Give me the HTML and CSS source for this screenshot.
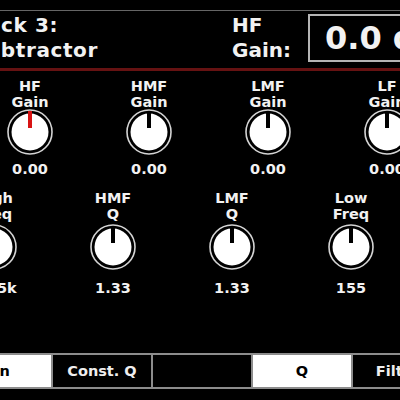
FILE: index.html
```html
<!DOCTYPE html>
<html lang="en">
<head>
<meta charset="utf-8">
<title>EQ</title>
<link rel="stylesheet" href="styles.css">
</head>
<body>
<div class="screen">
  <header class="header">
    <div class="title"><div>Rack 3:</div><div>Subtractor</div></div>
    <div class="param-name"><div>HF</div><div>Gain:</div></div>
    <div class="value-box">0.0 dB</div>
  </header>

  <section class="row row-gain">
    <div class="cell">
      <div class="label">HF<br>Gain</div>
      <svg class="knob" viewBox="0 0 46 46"><circle cx="23" cy="23" r="22" class="ring"/><circle cx="23" cy="23" r="18.5" class="disk"/><rect x="21" y="2" width="4" height="17" class="ind active"/></svg>
      <div class="value">0.00</div>
    </div>
    <div class="cell">
      <div class="label">HMF<br>Gain</div>
      <svg class="knob" viewBox="0 0 46 46"><circle cx="23" cy="23" r="22" class="ring"/><circle cx="23" cy="23" r="18.5" class="disk"/><rect x="21" y="2" width="4" height="17" class="ind"/></svg>
      <div class="value">0.00</div>
    </div>
    <div class="cell">
      <div class="label">LMF<br>Gain</div>
      <svg class="knob" viewBox="0 0 46 46"><circle cx="23" cy="23" r="22" class="ring"/><circle cx="23" cy="23" r="18.5" class="disk"/><rect x="21" y="2" width="4" height="17" class="ind"/></svg>
      <div class="value">0.00</div>
    </div>
    <div class="cell">
      <div class="label">LF<br>Gain</div>
      <svg class="knob" viewBox="0 0 46 46"><circle cx="23" cy="23" r="22" class="ring"/><circle cx="23" cy="23" r="18.5" class="disk"/><rect x="21" y="2" width="4" height="17" class="ind"/></svg>
      <div class="value">0.00</div>
    </div>
  </section>

  <section class="row row-q">
    <div class="cell">
      <div class="label">High<br>Freq</div>
      <svg class="knob" viewBox="0 0 46 46"><circle cx="23" cy="23" r="22" class="ring"/><circle cx="23" cy="23" r="18.5" class="disk"/><rect x="21" y="2" width="4" height="17" class="ind"/></svg>
      <div class="value">12.5k</div>
    </div>
    <div class="cell">
      <div class="label">HMF<br>Q</div>
      <svg class="knob" viewBox="0 0 46 46"><circle cx="23" cy="23" r="22" class="ring"/><circle cx="23" cy="23" r="18.5" class="disk"/><rect x="21" y="2" width="4" height="17" class="ind"/></svg>
      <div class="value">1.33</div>
    </div>
    <div class="cell">
      <div class="label">LMF<br>Q</div>
      <svg class="knob" viewBox="0 0 46 46"><circle cx="23" cy="23" r="22" class="ring"/><circle cx="23" cy="23" r="18.5" class="disk"/><rect x="21" y="2" width="4" height="17" class="ind"/></svg>
      <div class="value">1.33</div>
    </div>
    <div class="cell">
      <div class="label">Low<br>Freq</div>
      <svg class="knob" viewBox="0 0 46 46"><circle cx="23" cy="23" r="22" class="ring"/><circle cx="23" cy="23" r="18.5" class="disk"/><rect x="21" y="2" width="4" height="17" class="ind"/></svg>
      <div class="value">155</div>
    </div>
  </section>

  <nav class="buttons">
    <div class="btn on">In</div>
    <div class="btn">Const. Q</div>
    <div class="btn"></div>
    <div class="btn on">Q</div>
    <div class="btn">Filters</div>
  </nav>
</div>
</body>
</html>
```

FILE: styles.css
```css
html, body {
  margin: 0;
  width: 400px;
  height: 400px;
  overflow: hidden;
  background: #000;
}
body {
  font-family: "DejaVu Sans", Verdana, sans-serif;
  font-weight: bold;
  color: #f2f2f2;
  white-space: nowrap;
}
.screen {
  padding-top: 10px;
}
.header {
  display: flex;
  height: 57px;
  border-top: 1px solid #666;
  border-bottom: 3px solid #661212;
}
.title {
  flex: 0 0 261px;
  margin-left: -29px;
  padding-top: 2px;
  font-size: 20px;
  line-height: 25px;
  letter-spacing: 0.6px;
}
.param-name {
  flex: 0 0 76px;
  padding-top: 2px;
  font-size: 20px;
  line-height: 25px;
}
.value-box {
  flex: 0 0 140px;
  margin-top: 3px;
  height: 44px;
  border: 2px solid #b5b5b5;
  padding-left: 15px;
  font-size: 32px;
  line-height: 44px;
}
.row {
  display: flex;
}
.row-gain {
  margin-top: 7px;
  margin-left: -29.5px;
}
.row-q {
  margin-top: 13px;
  margin-left: -65.5px;
}
.cell {
  flex: 0 0 119px;
  display: flex;
  flex-direction: column;
  align-items: center;
}
.label {
  font-size: 14.5px;
  line-height: 16px;
  text-align: center;
}
.knob {
  display: block;
  width: 46px;
  height: 46px;
  margin-top: -1px;
}
.row-q .knob {
  margin-top: 2px;
}
.ring {
  fill: #000;
  stroke: #d4d4d4;
  stroke-width: 1.6;
}
.disk {
  fill: #fff;
}
.ind {
  fill: #000;
}
.ind.active {
  fill: #d81414;
}
.value {
  margin-top: 6px;
  font-size: 14.5px;
  line-height: 16px;
}
.row-q .value {
  margin-top: 10px;
}
.buttons {
  display: flex;
  gap: 2px;
  margin-top: 57px;
  margin-left: -47px;
  padding: 2px 0;
  background: #8c8c8c;
}
.btn {
  flex: 0 0 98px;
  height: 32px;
  display: flex;
  align-items: center;
  justify-content: center;
  font-size: 14.5px;
  background: #000;
  color: #eee;
}
.btn.on {
  background: #fff;
  color: #000;
}
```
